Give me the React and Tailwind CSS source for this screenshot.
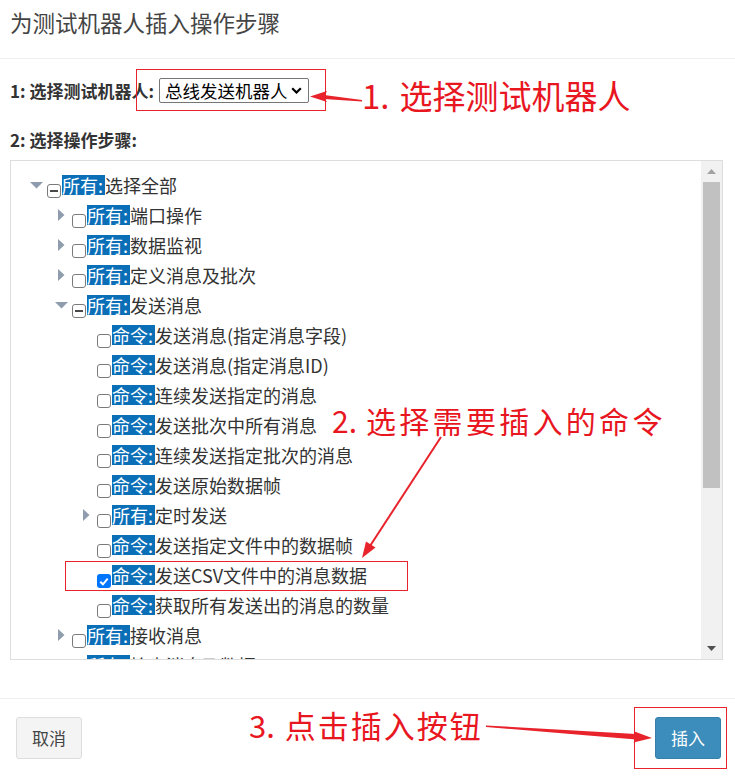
import React from "react";

const FONT = { fontFamily: '"Noto Sans CJK SC", "Noto Sans", sans-serif' };

const rows = [
  { l: 0, t: "down", c: "ind", tag: "所有:", text: "选择全部" },
  { l: 1, t: "right", c: "off", tag: "所有:", text: "端口操作" },
  { l: 1, t: "right", c: "off", tag: "所有:", text: "数据监视" },
  { l: 1, t: "right", c: "off", tag: "所有:", text: "定义消息及批次" },
  { l: 1, t: "down", c: "ind", tag: "所有:", text: "发送消息" },
  { l: 2, t: null, c: "off", tag: "命令:", text: "发送消息(指定消息字段)" },
  { l: 2, t: null, c: "off", tag: "命令:", text: "发送消息(指定消息ID)" },
  { l: 2, t: null, c: "off", tag: "命令:", text: "连续发送指定的消息" },
  { l: 2, t: null, c: "off", tag: "命令:", text: "发送批次中所有消息" },
  { l: 2, t: null, c: "off", tag: "命令:", text: "连续发送指定批次的消息" },
  { l: 2, t: null, c: "off", tag: "命令:", text: "发送原始数据帧" },
  { l: 2, t: "right", c: "off", tag: "所有:", text: "定时发送" },
  { l: 2, t: null, c: "off", tag: "命令:", text: "发送指定文件中的数据帧" },
  { l: 2, t: null, c: "on", tag: "命令:", text: "发送CSV文件中的消息数据" },
  { l: 2, t: null, c: "off", tag: "命令:", text: "获取所有发送出的消息的数量" },
  { l: 1, t: "right", c: "off", tag: "所有:", text: "接收消息" },
  { l: 1, t: "right", c: "off", tag: "所有:", text: "检查消息及数据" },
];

const PAD = ["pl-[17px]", "pl-[42px]", "pl-[67px]"];

function Toggle({ t }) {
  return (
    <span className="w-[16px] h-[20px] flex items-center justify-center shrink-0">
      {t === "down" && (
        <svg width="13" height="7" viewBox="0 0 13 7">
          <polygon points="0,0 13,0 6.5,6.5" fill="#8f9cad" />
        </svg>
      )}
      {t === "right" && (
        <svg width="7" height="12" viewBox="0 0 7 12">
          <polygon points="0,0 6.5,6 0,12" fill="#8f9cad" />
        </svg>
      )}
    </span>
  );
}

function Check({ c }) {
  if (c === "on") {
    return (
      <span className="mt-[14px] ml-[3px] w-[14px] h-[14px] rounded-[3px] bg-[#0075ff] flex items-center justify-center shrink-0">
        <svg width="10" height="9" viewBox="0 0 10 9">
          <path d="M1.3 4.8 L3.9 7.3 L8.7 1.6" fill="none" stroke="#fff" strokeWidth="2" />
        </svg>
      </span>
    );
  }
  return (
    <span className="mt-[14px] ml-[3px] w-[14px] h-[14px] rounded-[3px] border border-[#7a7a7a] bg-white flex items-center justify-center shrink-0">
      {c === "ind" && <span className="w-[8px] h-[2px] bg-[#4a4a4a]" />}
    </span>
  );
}

function Row({ r }) {
  return (
    <div className={`h-[30px] flex items-start ${PAD[r.l]}`}>
      <span className="mt-[5px]">
        <Toggle t={r.t} />
      </span>
      <Check c={r.c} />
      <span className="ml-[1px] mt-[5px] h-[20px] leading-[20px] inline-block bg-[#0b6fb8] text-white text-[18px] pr-[2px] whitespace-nowrap">
        {r.tag}
      </span>
      <span className="mt-[5px] h-[20px] leading-[20px] inline-block text-[#333] text-[18px] whitespace-nowrap">
        {r.text}
      </span>
    </div>
  );
}

export default function App() {
  return (
    <div className="relative w-[735px] h-[777px] bg-white overflow-hidden" style={FONT}>
      {/* header */}
      <div className="h-[59px] border-b border-[#efefef] px-[10px] pt-[7px]">
        <div className="text-[22.5px] leading-[30px] text-[#444]">为测试机器人插入操作步骤</div>
      </div>

      {/* body */}
      <div className="px-[10px]">
        <div className="mt-[19px] h-[25px] flex items-center">
          <span className="font-bold text-[17px] text-[#333] whitespace-nowrap">1: 选择测试机器人:</span>
          <div className="ml-[5px] w-[150px] h-[25px] border border-[#767676] rounded-[2px] flex items-center pl-[5px] pr-[6px] justify-between bg-white">
            <span className="text-[17.5px] leading-[23px] text-black whitespace-nowrap">总线发送机器人</span>
            <svg width="11" height="7" viewBox="0 0 11 7">
              <path d="M1.2 1.2 L5.5 5.5 L9.8 1.2" fill="none" stroke="#000" strokeWidth="2.2" />
            </svg>
          </div>
        </div>
        <div className="mt-[25px] h-[24px] leading-[24px] font-bold text-[17px] text-[#333]">2: 选择操作步骤:</div>

        <div className="mt-[8px] w-[713px] h-[500px] border border-[#dddddd] flex">
          <div className="flex-1 overflow-hidden pt-[9px]">
            {rows.map((r, i) => (
              <Row key={i} r={r} />
            ))}
          </div>
          <div className="w-[21px] bg-[#f1f1f1] flex flex-col items-center">
            <div className="h-[21px] flex items-center justify-center">
              <svg width="9" height="5" viewBox="0 0 9 5">
                <polygon points="0,5 9,5 4.5,0" fill="#a3a3a3" />
              </svg>
            </div>
            <div className="w-[17px] h-[306px] bg-[#c1c1c1]" />
            <div className="flex-1" />
            <div className="h-[21px] flex items-center justify-center">
              <svg width="9" height="5" viewBox="0 0 9 5">
                <polygon points="0,0 9,0 4.5,5" fill="#505050" />
              </svg>
            </div>
          </div>
        </div>
      </div>

      {/* footer */}
      <div className="mt-[38px] border-t border-[#efefef] pt-[18px] pl-[16px] pr-[14px] flex justify-between">
        <button className="w-[66px] h-[42px] bg-[#f4f4f4] border border-[#dddddd] rounded-[3px] text-[17px] text-[#444]">
          取消
        </button>
        <button className="w-[66px] h-[42px] bg-[#3c8dbc] border border-[#367fa9] rounded-[3px] text-[17px] text-white">
          插入
        </button>
      </div>

      {/* annotations */}
      <div className="absolute left-[136px] top-[69px] w-[190px] h-[42px] border border-[#e8232b]" />
      <div className="absolute left-[65px] top-[561px] w-[343px] h-[30px] border border-[#e8232b]" />
      <div className="absolute left-[634px] top-[707px] w-[93px] h-[62px] border border-[#e8232b]" />

      <div className="absolute left-[362px] top-[79px] flex items-baseline text-[#e8161f] leading-none whitespace-nowrap">
        <span className="text-[33px]">1.</span>
        <span className="ml-[10px] text-[33px]">选择测试机器人</span>
      </div>
      <div className="absolute left-[332px] top-[405px] flex items-baseline text-[#e8161f] leading-none whitespace-nowrap">
        <span className="text-[30px]">2.</span>
        <span className="ml-[9px] text-[30px] tracking-[3.3px]">选择需要插入的命令</span>
      </div>
      <div className="absolute left-[249px] top-[709px] flex items-baseline text-[#e8161f] leading-none whitespace-nowrap">
        <span className="text-[31px]">3.</span>
        <span className="ml-[10px] text-[31px] tracking-[2px]">点击插入按钮</span>
      </div>

      <svg className="absolute left-0 top-0 pointer-events-none" width="735" height="777" viewBox="0 0 735 777">
        {/* arrow 1 */}
        <polygon points="362,100 362,101.5 324,99 324,95" fill="#e8232b" />
        <polygon points="310,96.5 327,91 324,97 327,102" fill="#e8232b" />
        {/* arrow 2 */}
        <line x1="441" y1="437" x2="370" y2="546" stroke="#e8232b" strokeWidth="2" />
        <polygon points="362,558 375.5,547.5 366,541.5" fill="#e8232b" />
        {/* arrow 3 */}
        <polygon points="486,725.5 486,727 636,739.5 636,734" fill="#e8232b" />
        <polygon points="652,738 633.5,742.5 636,737 634.5,731.5" fill="#e8232b" />
      </svg>
    </div>
  );
}
